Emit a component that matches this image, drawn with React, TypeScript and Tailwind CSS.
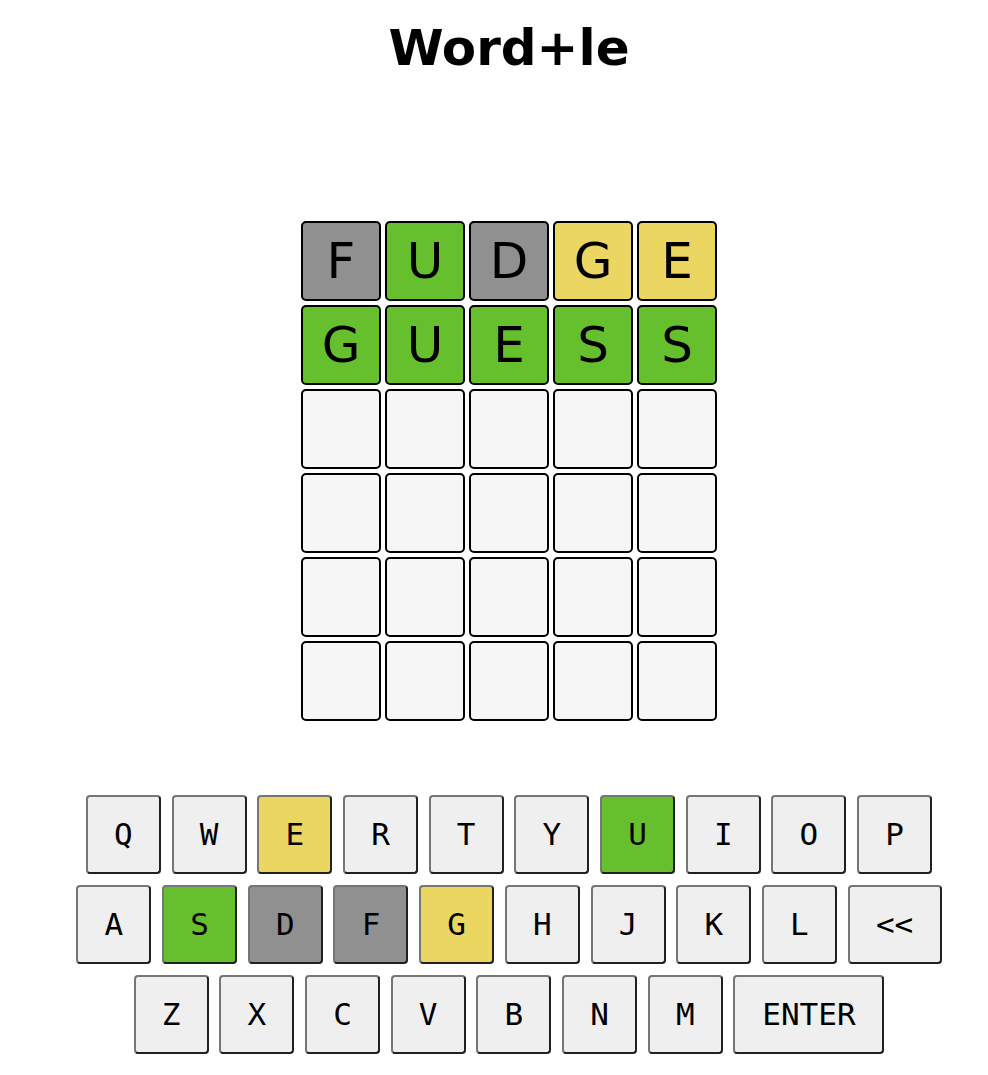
import type { ReactElement } from "react";

type Mark = "hit" | "near" | "miss" | "none";

const tileColor: Record<Mark, string> = {
  hit: "bg-[#66c02e]",
  near: "bg-[#ead660]",
  miss: "bg-[#909090]",
  none: "bg-[#f6f6f6]",
};

const keyColor: Record<Mark, string> = {
  hit: "bg-[#66c02e]",
  near: "bg-[#ead660]",
  miss: "bg-[#909090]",
  none: "bg-[#efefef]",
};

const guesses: { letter: string; mark: Mark }[][] = [
  [
    { letter: "F", mark: "miss" },
    { letter: "U", mark: "hit" },
    { letter: "D", mark: "miss" },
    { letter: "G", mark: "near" },
    { letter: "E", mark: "near" },
  ],
  [
    { letter: "G", mark: "hit" },
    { letter: "U", mark: "hit" },
    { letter: "E", mark: "hit" },
    { letter: "S", mark: "hit" },
    { letter: "S", mark: "hit" },
  ],
];

const keyMarks: Record<string, Mark> = {
  E: "near",
  U: "hit",
  S: "hit",
  D: "miss",
  F: "miss",
  G: "near",
};

const keyRows = [
  ["Q", "W", "E", "R", "T", "Y", "U", "I", "O", "P"],
  ["A", "S", "D", "F", "G", "H", "J", "K", "L", "<<"],
  ["Z", "X", "C", "V", "B", "N", "M", "ENTER"],
];

const Tile = ({ letter, mark }: { letter: string; mark: Mark }): ReactElement => (
  <div
    className={`flex h-[80px] w-[80px] items-center justify-center rounded-[5px] border-2 border-black text-[50px] leading-none text-black ${tileColor[mark]}`}
  >
    {letter}
  </div>
);

const Key = ({ label }: { label: string }): ReactElement => {
  const width =
    label === "ENTER" ? "w-[151px]" : label === "<<" ? "w-[94px]" : "w-[75px]";
  return (
    <button
      type="button"
      className={`flex h-[79px] items-center justify-center rounded-[4px] border-2 border-[#767676] [border-style:outset] font-['DejaVu_Sans_Mono',monospace] text-[31px] text-black ${width} ${keyColor[keyMarks[label] ?? "none"]}`}
    >
      {label}
    </button>
  );
};

export default function App(): ReactElement {
  const rows = [...guesses];
  while (rows.length < 6) {
    rows.push(Array.from({ length: 5 }, () => ({ letter: "", mark: "none" as Mark })));
  }

  return (
    <div className="flex min-h-screen w-full flex-col items-center bg-white pl-[30px] font-['DejaVu_Sans',sans-serif]">
      {/* Title */}
      <h1 className="mt-[18px] text-[50px] leading-[60px] font-bold text-black">Word+le</h1>

      {/* Board */}
      <div className="mt-[143px] grid grid-cols-5 gap-[4px]">
        {rows.map((row, r) =>
          row.map((cell, c) => <Tile key={`${r}-${c}`} letter={cell.letter} mark={cell.mark} />),
        )}
      </div>

      {/* Keyboard */}
      <div className="mt-[74px] flex flex-col items-center gap-[11px]">
        {keyRows.map((row, i) => (
          <div key={i} className="flex gap-[10.7px]">
            {row.map((k) => (
              <Key key={k} label={k} />
            ))}
          </div>
        ))}
      </div>
    </div>
  );
}
